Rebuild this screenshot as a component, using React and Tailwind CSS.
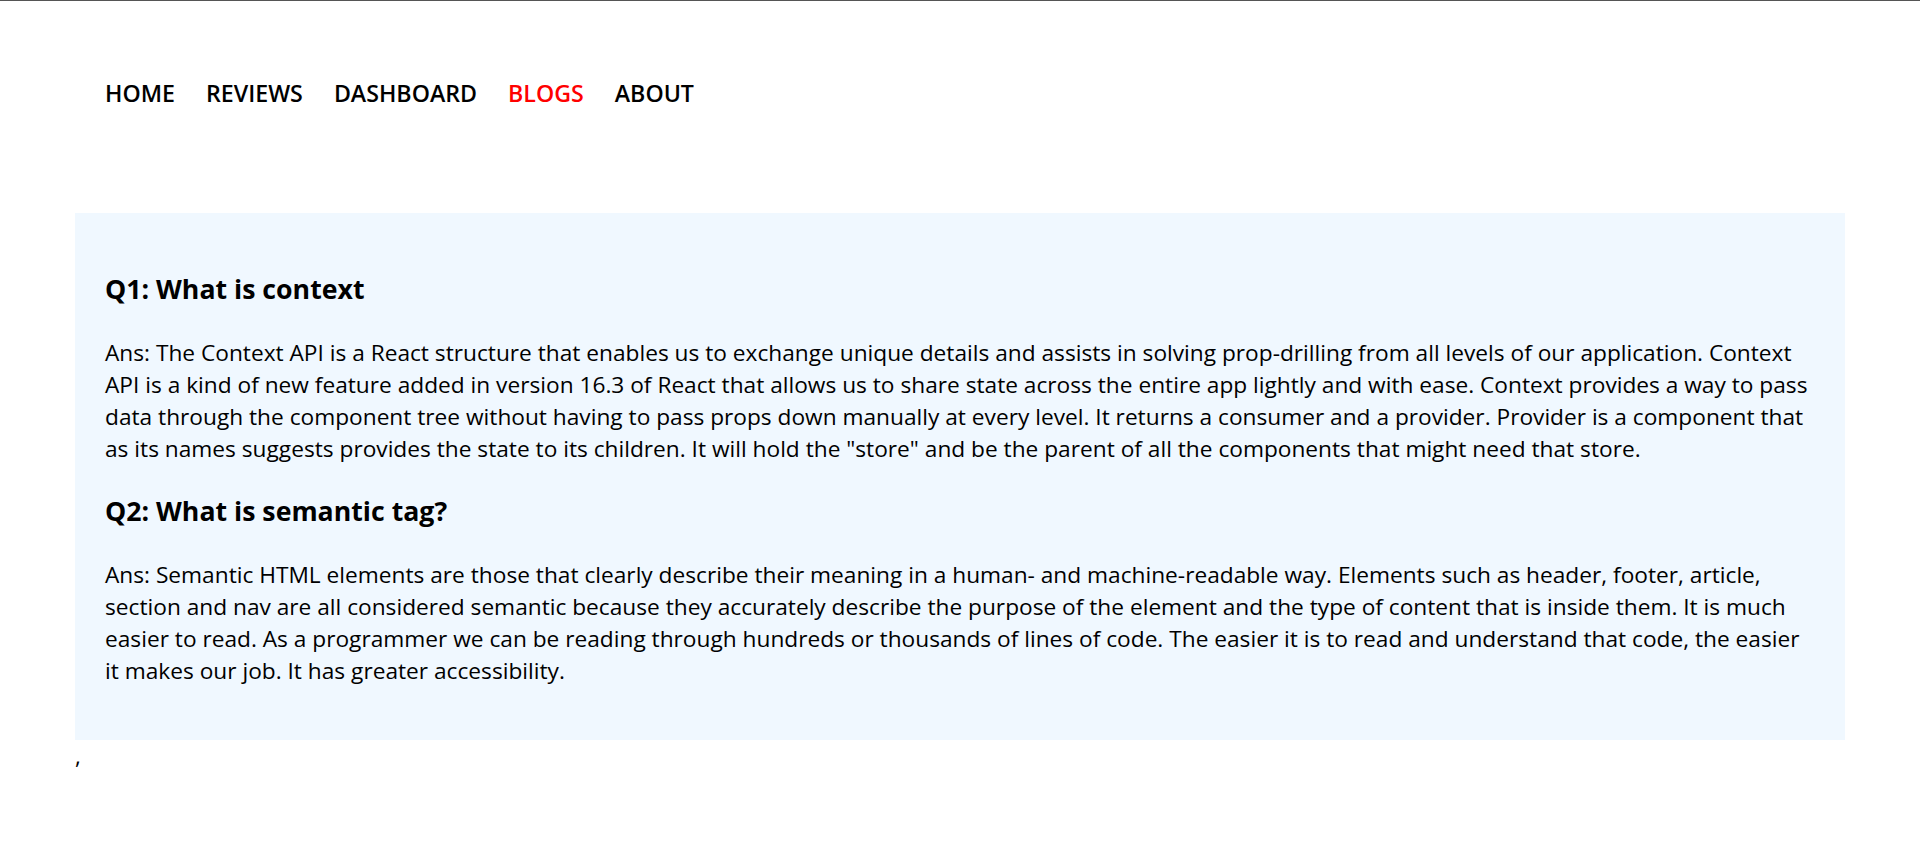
const NAV = ['HOME', 'REVIEWS', 'DASHBOARD', 'BLOGS', 'ABOUT'];

// answers kept in the same line breaks as the page shows them
const QA = [
  {
    q: 'Q1: What is context',
    a: [
      'Ans: The Context API is a React structure that enables us to exchange unique details and assists in solving prop-drilling from all levels of our application. Context',
      'API is a kind of new feature added in version 16.3 of React that allows us to share state across the entire app lightly and with ease. Context provides a way to pass',
      'data through the component tree without having to pass props down manually at every level. It returns a consumer and a provider. Provider is a component that',
      'as its names suggests provides the state to its children. It will hold the "store" and be the parent of all the components that might need that store.',
    ],
  },
  {
    q: 'Q2: What is semantic tag?',
    a: [
      'Ans: Semantic HTML elements are those that clearly describe their meaning in a human- and machine-readable way. Elements such as header, footer, article,',
      'section and nav are all considered semantic because they accurately describe the purpose of the element and the type of content that is inside them. It is much',
      'easier to read. As a programmer we can be reading through hundreds or thousands of lines of code. The easier it is to read and understand that code, the easier',
      'it makes our job. It has greater accessibility.',
    ],
  },
];

export default function App() {
  return (
    <div className="min-h-[864px] bg-white border-t border-[#555] font-['Open_Sans',sans-serif] text-black">
      <header className="px-[105px] pt-[76px]">
        <nav className="flex gap-[31px] text-[23.2px] leading-[32px] font-semibold">
          {NAV.map((n) => (
            <a key={n} href="#" className={n === 'BLOGS' ? 'text-[#ff0000]' : 'text-black'}>{n}</a>
          ))}
        </nav>
      </header>
      <main className="mx-[75px] mt-[104px]">
        <section className="bg-[#f0f8ff] px-[30px] pt-[58px] pb-[53px]">
          {QA.map((item, i) => (
            <div key={item.q}>
              <h3 className="text-[26.7px] leading-[36px] font-bold mb-[30px]">{item.q}</h3>
              <p className={`text-[22.7px] leading-[32px] ${i === 0 ? 'mb-[28px]' : ''}`}>
                {item.a.map((line) => (
                  <span key={line} className="block whitespace-nowrap">{line}</span>
                ))}
              </p>
            </div>
          ))}
        </section>
        <p className="text-[22.5px] leading-[32px]">,</p>
      </main>
    </div>
  );
}
